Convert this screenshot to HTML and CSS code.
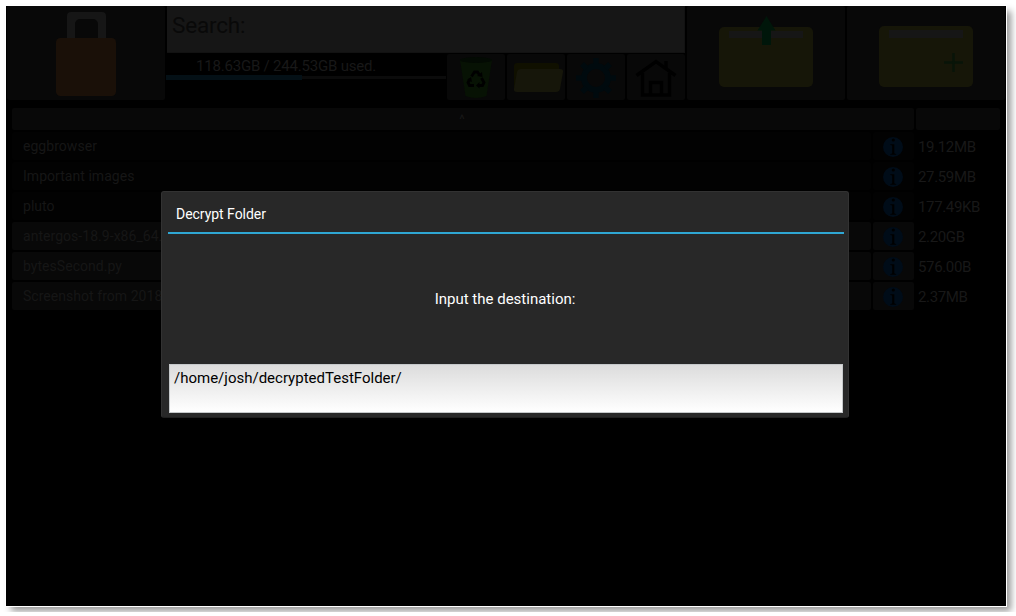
FILE: index.html
```html
<!DOCTYPE html>
<html lang="en">
<head>
<meta charset="utf-8">
<title>Decrypt Folder</title>
<link rel="stylesheet" href="styles.css">
</head>
<body>
<svg class="defs" width="0" height="0">
  <symbol id="info" viewBox="0 0 20 20">
    <circle cx="10" cy="10" r="10" fill="#000c18"/>
    <circle cx="10.300" cy="3" r="1.600" fill="#000"/>
    <path d="M7.300 7.200h4v8.800q.2.900 1.900 1v.7H7.300V17q1.700-.1 1.900-1V9q0-1-1.900-1z" fill="#000"/>
  </symbol>
</svg>
<div class="window">
  <header class="toolbar">
    <div class="tile">
      <svg width="158" height="94" viewBox="0 0 158 94">
        <path d="M60 34V10a4 4 0 0 1 4-4h31a4 4 0 0 1 4 4v24h-8V18a5 5 0 0 0-5-5H73a5 5 0 0 0-5 5v16z" fill="#161616"/>
        <rect x="49" y="32" width="60" height="58" rx="4.500" fill="#1a1008"/>
      </svg>
    </div>
    <div class="middle">
      <div class="search">Search:</div>
      <div class="status">
        <div class="usage">
          <div class="usage-text">118.63GB / 244.53GB used.</div>
          <div class="track"><div class="fill"></div></div>
        </div>
        <div class="tile small">
          <svg width="58" height="46" viewBox="0 0 58 46">
            <path d="M13 6q16-5 32 0l-5.500 36q-10.500 4-21 0z" fill="#071204"/>
            <ellipse cx="29" cy="6" rx="16" ry="3" fill="#030a03"/>
            <g fill="none" stroke="#000" stroke-width="2.800">
              <path d="M24.500 22.500l3-4.500h3l2 3"/>
              <path d="M34.500 24l2.500 4.500-1.500 3h-4"/>
              <path d="M27 31.500h-4.500l-1.500-3 2-3.500"/>
            </g>
            <path d="M30 22l5.500 1-.5-5zM32.500 28v6.500l-3.500-3zM20 26l4-3 1 5z" fill="#000"/>
          </svg>
        </div>
        <div class="tile small">
          <svg width="58" height="46" viewBox="0 0 58 46">
            <path d="M7 12q0-3 3-3h39q3 0 3 3v24H7z" fill="#101000"/>
            <path d="M14 15h39q3.500 0 3 3l-3 17q-.7 3-4 3H10q-3.500 0-3-3l3-17q.7-3 4-3z" fill="#16160a"/>
          </svg>
        </div>
        <div class="tile small">
          <svg width="58" height="46" viewBox="0 0 58 46">
            <circle cx="29" cy="24" r="12" fill="none" stroke="#000a0e" stroke-width="6"/>
            <g stroke="#000a0e" stroke-width="5.500">
              <path d="M29 4v6M29 38v6M9 24h6M43 24h6M15 10l4.500 4.500M38.500 33.500L43 38M15 38l4.500-4.500M38.500 14.500L43 10"/>
            </g>
          </svg>
        </div>
        <div class="tile small">
          <svg width="58" height="46" viewBox="0 0 58 46">
            <g fill="none" stroke="#000" stroke-width="3.400">
              <path d="M9.500 21.500L29 7.500l19.500 14"/>
              <path d="M15.500 19v22h27V19M23.500 41V28.500h11V41M39 14V7"/>
            </g>
          </svg>
        </div>
      </div>
    </div>
    <div class="tile">
      <svg width="158" height="94" viewBox="0 0 158 94">
        <rect x="32" y="21" width="94" height="60" rx="5" fill="#161608"/>
        <rect x="42" y="25" width="74" height="7" fill="#161616"/>
        <path d="M79.500 10l9 14.500H84V39h-9V24.500h-4.500z" fill="#00160a"/>
      </svg>
    </div>
    <div class="tile">
      <svg width="158" height="94" viewBox="0 0 158 94">
        <rect x="32" y="20" width="94" height="61" rx="5" fill="#161608"/>
        <rect x="42" y="24" width="74" height="8" fill="#161616"/>
        <path d="M97 56.500h19M106.500 47v19" stroke="#081408" stroke-width="2.500"/>
      </svg>
    </div>
  </header>
  <main class="files">
    <div class="head name">^</div><div class="head"></div>
    <div class="cell dir">eggbrowser</div><div class="cell dir icon"><svg width="20" height="20"><use href="#info"/></svg></div><div class="size">19.12MB</div>
    <div class="cell dir">Important images</div><div class="cell dir icon"><svg width="20" height="20"><use href="#info"/></svg></div><div class="size">27.59MB</div>
    <div class="cell dir">pluto</div><div class="cell dir icon"><svg width="20" height="20"><use href="#info"/></svg></div><div class="size">177.49KB</div>
    <div class="cell">antergos-18.9-x86_64.iso</div><div class="cell icon"><svg width="20" height="20"><use href="#info"/></svg></div><div class="size">2.20GB</div>
    <div class="cell">bytesSecond.py</div><div class="cell icon"><svg width="20" height="20"><use href="#info"/></svg></div><div class="size">576.00B</div>
    <div class="cell">Screenshot from 2018</div><div class="cell icon"><svg width="20" height="20"><use href="#info"/></svg></div><div class="size">2.37MB</div>
  </main>
  <section class="dialog">
    <h1 class="title">Decrypt Folder</h1>
    <p class="prompt">Input the destination:</p>
    <div class="path">/home/josh/decryptedTestFolder/</div>
  </section>
</div>
</body>
</html>
```
FILE: styles.css
```css
* { box-sizing: border-box; }
body {
  margin: 0;
  padding: 6px;
  background: #fff;
  font-family: Roboto, "Liberation Sans", sans-serif;
  font-size: 15px;
  overflow: hidden;
}
svg { display: block; }
.defs { position: absolute; }
.window {
  position: relative;
  width: 1000px;
  height: 600px;
  background: #000;
  box-shadow: 0 0 0 1px #fff, 5px 5px 7px rgba(0, 0, 0, .42);
}
.toolbar {
  display: grid;
  grid-template-columns: 158px 518px 158px 158px;
  column-gap: 2px;
  height: 94px;
  margin-left: 1px;
}
.tile { background: #080808; border-radius: 2px; overflow: hidden; }
.middle { display: flex; flex-direction: column; }
.search {
  height: 47px;
  padding: 4px 5px 0;
  background: #161616;
  border: 1px solid #121212;
  border-left: 0;
  color: #090909;
  font-size: 22.5px;
  letter-spacing: -.2px;
  line-height: 28px;
}
.status {
  display: grid;
  grid-template-columns: 278px repeat(4, 58px);
  column-gap: 2px;
  height: 46px;
  margin-top: 1px;
}
.usage-text {
  padding-left: 29px;
  color: #181818;
  letter-spacing: -.2px;
  line-height: 18px;
  margin-top: 3px;
}
.track { height: 3px; margin: 1px -1px 0 -1px; background: #0b0b0b; }
.fill { position: relative; top: -1px; width: 136px; height: 5px; background: #041016; }
.files {
  display: grid;
  grid-template-columns: 859px 41px 84px;
  column-gap: 2px;
  row-gap: 2px;
  grid-template-rows: 22px repeat(6, 28px);
  margin: 8px 0 0 6px;
}
.head { background: #080808; border-radius: 2px; }
.name {
  grid-column: span 2;
  color: #181818;
  font-size: 13px;
  line-height: 24px;
  padding-right: 2px;
  text-align: center;
}
.cell {
  padding-left: 11px;
  background: #080808;
  border-radius: 2px;
  color: #161616;
  font-size: 14px;
  line-height: 29px;
  letter-spacing: .04px;
  white-space: nowrap;
  overflow: hidden;
}
.dir { background: #020202; }
.icon { padding: 5px 0 0 10px; }
.size { padding-left: 2px; color: #181818; letter-spacing: -.35px; line-height: 30px; }
.dialog {
  position: absolute;
  left: 155px;
  top: 185px;
  width: 688px;
  height: 227px;
  padding: 0 5px 4px 7px;
  background: #282828;
  border: 1px solid #323232;
  border-bottom-color: #1e1e1e;
  border-radius: 3px;
  display: flex;
  flex-direction: column;
}
.title {
  height: 42px;
  margin: 0 -1px 0 -1px;
  padding: 14px 8px 0;
  border-bottom: 2px solid #2fa7d4;
  color: #fff;
  font-size: 14px;
  font-weight: 400;
  letter-spacing: -.03px;
  line-height: 17px;
}
.prompt {
  flex: 1;
  margin: 0;
  padding-right: 2px;
  color: #fff;
  line-height: 130px;
  text-align: center;
}
.path {
  height: 49px;
  padding: 4px 4px 0;
  border: 1px solid #c6c9cb;
  background: linear-gradient(#dcdcdc, #fff);
  color: #000;
  line-height: 19px;
}
```
